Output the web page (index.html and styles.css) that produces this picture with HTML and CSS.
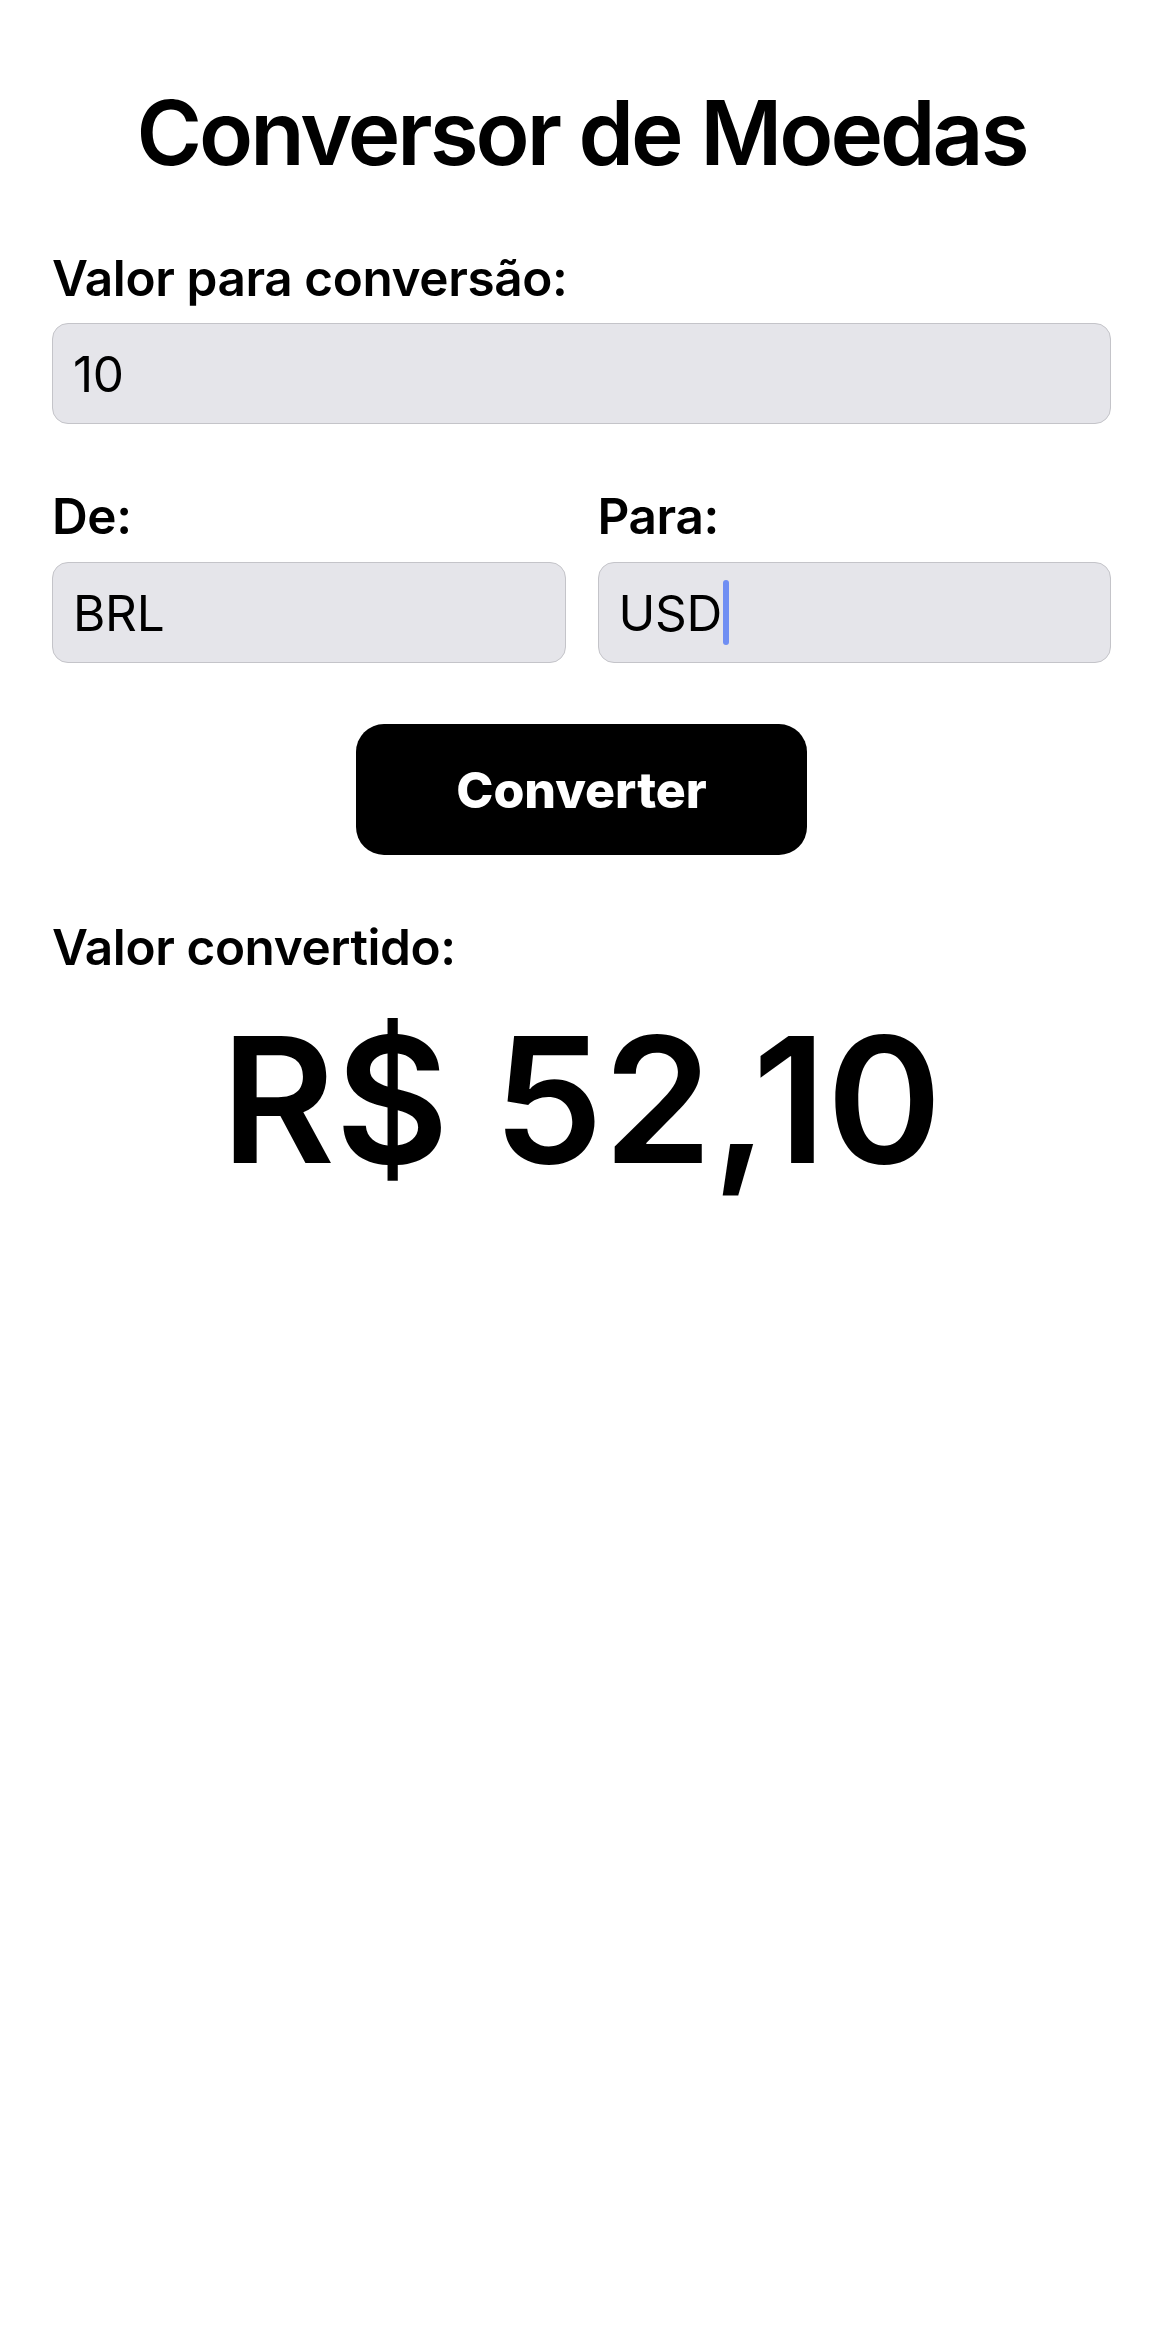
FILE: index.html
```html
<!DOCTYPE html>
<html lang="pt-BR">
<head>
<meta charset="utf-8">
<title>Conversor de Moedas</title>
<link rel="stylesheet" href="styles.css">
</head>
<body>
<main class="app">
  <h1 class="title">Conversor de Moedas</h1>

  <section class="field-group">
    <label class="label">Valor para conversão:</label>
    <div class="field"><span class="field-text">10</span></div>
  </section>

  <section class="row">
    <div class="col">
      <label class="label">De:</label>
      <div class="field"><span class="field-text">BRL</span></div>
    </div>
    <div class="col">
      <label class="label">Para:</label>
      <div class="field"><span class="field-text">USD</span><span class="caret"></span></div>
    </div>
  </section>

  <div class="button-wrap">
    <button class="convert-btn">Converter</button>
  </div>

  <section class="result">
    <label class="label">Valor convertido:</label>
    <div class="result-value">R$ 52,10</div>
  </section>
</main>
</body>
</html>
```

FILE: styles.css
```css
* {
  box-sizing: border-box;
}

html, body {
  margin: 0;
  padding: 0;
  background: #ffffff;
}

body {
  font-family: Inter, "Noto Sans", "Liberation Sans", sans-serif;
  color: #000000;
}

.app {
  display: flex;
  flex-direction: column;
  padding: 79px 52px 0 52px;
}

.title {
  margin: 0;
  font-size: 89px;
  line-height: 107px;
  font-weight: 600;
  text-align: center;
  letter-spacing: -3px;
}

.field-group {
  margin-top: 62px;
  display: flex;
  flex-direction: column;
}

.label {
  display: block;
  font-size: 49.5px;
  line-height: 60px;
  font-weight: 600;
  letter-spacing: -0.4px;
}

.field {
  margin-top: 15px;
  height: 101px;
  background: #e5e5ea;
  border: 1.5px solid #c4c4c9;
  border-radius: 16px;
  display: flex;
  align-items: center;
  padding-left: 20px;
}

.field-text {
  font-size: 49.5px;
  font-weight: 400;
  letter-spacing: -0.3px;
}

.caret {
  display: inline-block;
  width: 6px;
  height: 65px;
  margin-left: 1px;
  background: #6f8ef3;
  border-radius: 3px;
}

.row {
  margin-top: 62px;
  display: grid;
  grid-template-columns: 1fr 1fr;
  column-gap: 32px;
}

.col {
  display: flex;
  flex-direction: column;
}

.row .field {
  margin-top: 16px;
}

.button-wrap {
  margin-top: 61px;
  display: flex;
  justify-content: center;
}

.convert-btn {
  width: 451px;
  height: 131px;
  background: #000000;
  color: #ffffff;
  border: none;
  border-radius: 28px;
  font-family: Inter, "Noto Sans", "Liberation Sans", sans-serif;
  font-size: 50px;
  font-weight: 800;
  letter-spacing: 0;
  padding: 0;
}

.result {
  margin-top: 62px;
  display: flex;
  flex-direction: column;
}

.result-value {
  margin-top: 17px;
  font-size: 175px;
  line-height: 210px;
  font-weight: 600;
  text-align: center;
  letter-spacing: 0;
}
```
